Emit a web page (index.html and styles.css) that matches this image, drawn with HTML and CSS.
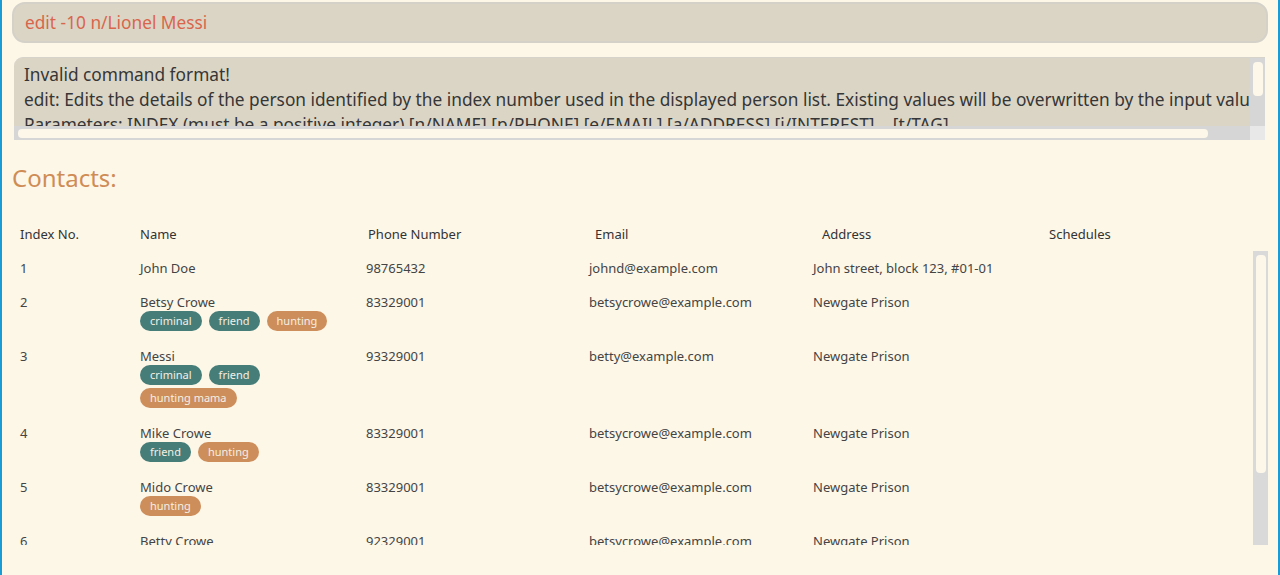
FILE: index.html
```html
<!DOCTYPE html>
<html lang="en">
<head>
<meta charset="utf-8">
<title>Contacts</title>
<link rel="stylesheet" href="styles.css">
</head>
<body>
<div class="app">
  <div class="command-box">edit -10 n/Lionel Messi</div>

  <div class="result-box">
    <div class="result-main">
      <div class="result-text">
        <div class="line">Invalid command format!</div>
        <div class="line">edit: Edits the details of the person identified by the index number used in the displayed person list. Existing values will be overwritten by the input values.</div>
        <div class="line">Parameters: INDEX (must be a positive integer) [n/NAME] [p/PHONE] [e/EMAIL] [a/ADDRESS] [i/INTEREST]... [t/TAG]...</div>
        <div class="line">Example: edit 1 p/91234567 e/johndoe@example.com</div>
      </div>
      <div class="vbar"><div class="vthumb"></div></div>
    </div>
    <div class="result-hrow">
      <div class="hbar"><div class="hthumb"></div></div>
      <div class="corner"></div>
    </div>
  </div>

  <div class="title">Contacts:</div>

  <div class="header-row">
    <div>Index No.</div>
    <div>Name</div>
    <div>Phone Number</div>
    <div>Email</div>
    <div>Address</div>
    <div>Schedules</div>
  </div>

  <div class="list">
    <div class="rows">
      <div class="row">
        <div>1</div>
        <div class="name-cell"><div class="name">John Doe</div></div>
        <div>98765432</div>
        <div>johnd@example.com</div>
        <div>John street, block 123, #01-01</div>
        <div></div>
      </div>
      <div class="row">
        <div>2</div>
        <div class="name-cell">
          <div class="name">Betsy Crowe</div>
          <div class="tags"><span class="tag teal">criminal</span><span class="tag teal">friend</span><span class="tag orange">hunting</span></div>
        </div>
        <div>83329001</div>
        <div>betsycrowe@example.com</div>
        <div>Newgate Prison</div>
        <div></div>
      </div>
      <div class="row">
        <div>3</div>
        <div class="name-cell">
          <div class="name">Messi</div>
          <div class="tags narrow"><span class="tag teal">criminal</span><span class="tag teal">friend</span><span class="tag orange">hunting mama</span></div>
        </div>
        <div>93329001</div>
        <div>betty@example.com</div>
        <div>Newgate Prison</div>
        <div></div>
      </div>
      <div class="row">
        <div>4</div>
        <div class="name-cell">
          <div class="name">Mike Crowe</div>
          <div class="tags"><span class="tag teal">friend</span><span class="tag orange">hunting</span></div>
        </div>
        <div>83329001</div>
        <div>betsycrowe@example.com</div>
        <div>Newgate Prison</div>
        <div></div>
      </div>
      <div class="row">
        <div>5</div>
        <div class="name-cell">
          <div class="name">Mido Crowe</div>
          <div class="tags"><span class="tag orange">hunting</span></div>
        </div>
        <div>83329001</div>
        <div>betsycrowe@example.com</div>
        <div>Newgate Prison</div>
        <div></div>
      </div>
      <div class="row">
        <div>6</div>
        <div class="name-cell"><div class="name">Betty Crowe</div></div>
        <div>92329001</div>
        <div>betsycrowe@example.com</div>
        <div>Newgate Prison</div>
        <div></div>
      </div>
    </div>
    <div class="lbar"><div class="lthumb"></div></div>
  </div>

  <div class="status">./data/addressbook.json</div>
</div>
</body>
</html>
```

FILE: styles.css
```css
* { box-sizing: border-box; }

html, body {
  margin: 0;
  height: 575px;
  overflow: hidden;
}

body {
  background: #fdf7e8;
  border-left: 2px solid #1b9bd5;
  border-right: 2px solid #1b9bd5;
  font-family: "Noto Sans", "Open Sans", sans-serif;
  color: #3a3a3a;
}

.app {
  padding: 2px 10px 0 10px;
  display: flex;
  flex-direction: column;
}

.command-box {
  height: 41px;
  background: #dbd5c6;
  border: 2px solid #d4d1c9;
  border-radius: 13px;
  color: #d9664c;
  font-size: 17.3px;
  line-height: 37px;
  padding-left: 11px;
}

.result-box {
  margin: 14px 3px 0 2px;
  height: 83px;
  display: flex;
  flex-direction: column;
  border-top-left-radius: 9px;
  overflow: hidden;
  background: #dbd5c6;
  border-top: 1px solid #d6d3cb;
}

.result-main {
  flex: 1;
  display: flex;
  min-height: 0;
}

.result-text {
  flex: 1;
  overflow: hidden;
  white-space: nowrap;
  font-size: 17.3px;
  line-height: 25px;
  padding: 4px 0 0 10px;
  color: #363636;
}

.vbar {
  width: 15px;
  background: #d6d6d6;
  padding: 4px 2px 0 3px;
}

.vthumb {
  height: 34px;
  background: #fdf7ea;
  border-radius: 4px;
}

.result-hrow {
  height: 14px;
  display: flex;
}

.hbar {
  flex: 1;
  background: #d6d6d6;
  padding: 3px 42px 2px 4px;
}

.hthumb {
  height: 9px;
  background: #fdf7ea;
  border-radius: 4px;
}

.corner {
  width: 15px;
  background: #e8e8e8;
}

.title {
  margin-top: 22px;
  font-size: 24px;
  line-height: 32px;
  color: #cf8c55;
}

.header-row,
.row {
  display: grid;
  font-size: 13px;
  line-height: 18px;
}

.header-row {
  margin-top: 31px;
  padding-left: 8px;
  grid-template-columns: 120px 228px 227px 227px 227px 1fr;
  color: #333;
}

.list {
  margin-top: 8px;
  height: 294px;
  display: flex;
  overflow: hidden;
}

.rows {
  flex: 1;
  overflow: hidden;
}

.row {
  padding: 8px 0 8px 8px;
  grid-template-columns: 120px 226px 223px 224px 1fr 0;
  color: #444;
}

.tags {
  display: flex;
  flex-wrap: wrap;
  gap: 3px 7px;
  max-width: 200px;
}

.tags.narrow {
  max-width: 130px;
}

.tag {
  height: 20px;
  line-height: 20px;
  padding: 0 10px;
  border-radius: 10px;
  font-size: 11px;
  color: #f4efe4;
}

.tag.teal { background: #467d78; }
.tag.orange { background: #cd8e5b; }

.lbar {
  width: 15px;
  background: #d9d9d9;
  padding: 4px 2px 0 3px;
}

.lthumb {
  height: 218px;
  background: #fdf7ea;
  border-radius: 4px;
}

.status {
  margin-top: 27px;
  padding-left: 28px;
  font-size: 12px;
  line-height: 18px;
  color: #888;
}
```
